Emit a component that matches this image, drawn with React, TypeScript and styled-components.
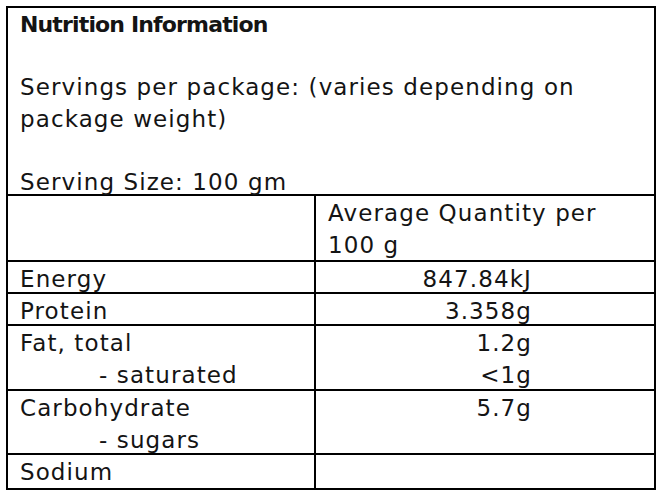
import styled, { createGlobalStyle } from "styled-components";

const GlobalStyle = createGlobalStyle`
  body {
    margin: 0;
    background: #fff;
  }
`;

const Page = styled.div`
  padding: 6px 0 0 6px;
`;

const Panel = styled.div`
  width: 650px;
  box-sizing: border-box;
  border: 2px solid #000;
  font-family: "DejaVu Sans", sans-serif;
  font-size: 23px;
  letter-spacing: 1.1px;
  color: #141414;
`;

const Header = styled.div`
  height: 188px;
  box-sizing: border-box;
  padding: 1px 12px 0;
  line-height: 31.5px;
  border-bottom: 2px solid #000;
`;

const Title = styled.div`
  font-weight: bold;
  font-size: 22px;
  letter-spacing: -0.85px;
`;

const Line = styled.div`
  min-height: 31.5px;
`;

const Row = styled.div<{ $h: number; $last?: boolean }>`
  display: grid;
  grid-template-columns: 308px 1fr;
  height: ${(p) => p.$h}px;
  border-bottom: ${(p) => (p.$last ? "none" : "2px solid #000")};
`;

const Cell = styled.div<{ $value?: boolean }>`
  padding: 1px ${(p) => (p.$value ? "122px" : "12px")} 0 12px;
  line-height: 32px;
  text-align: ${(p) => (p.$value ? "right" : "left")};
  white-space: nowrap;
  &:first-child {
    border-right: 2px solid #000;
  }
`;

const Sub = styled.div`
  padding-left: 79px;
`;

type Nutrient = {
  name: string;
  sub?: string;
  value: string;
  subValue?: string;
  h: number;
};

const rows: Nutrient[] = [
  { name: "Energy", value: "847.84kJ", h: 30 },
  { name: "Protein", value: "3.358g", h: 30 },
  { name: "Fat, total", sub: "- saturated", value: "1.2g", subValue: "<1g", h: 63 },
  { name: "Carbohydrate", sub: "- sugars", value: "5.7g", h: 62 },
  { name: "Sodium", value: "", h: 33 },
];

export default function App() {
  return (
    <Page>
      <GlobalStyle />
      <Panel>
        <Header>
          <Title>Nutrition Information</Title>
          <Line />
          <Line>Servings per package: (varies depending on</Line>
          <Line>package weight)</Line>
          <Line />
          <Line>Serving Size: 100 gm</Line>
        </Header>
        <Row $h={64}>
          <Cell />
          <Cell style={{ whiteSpace: "normal" }}>
            Average Quantity per
            <br />
            100 g
          </Cell>
        </Row>
        {rows.map((r, i) => (
          <Row key={r.name} $h={r.h} $last={i === rows.length - 1}>
            <Cell>
              {r.name}
              {r.sub && <Sub>{r.sub}</Sub>}
            </Cell>
            <Cell $value>
              {r.value}
              {r.subValue && <div>{r.subValue}</div>}
            </Cell>
          </Row>
        ))}
      </Panel>
    </Page>
  );
}
